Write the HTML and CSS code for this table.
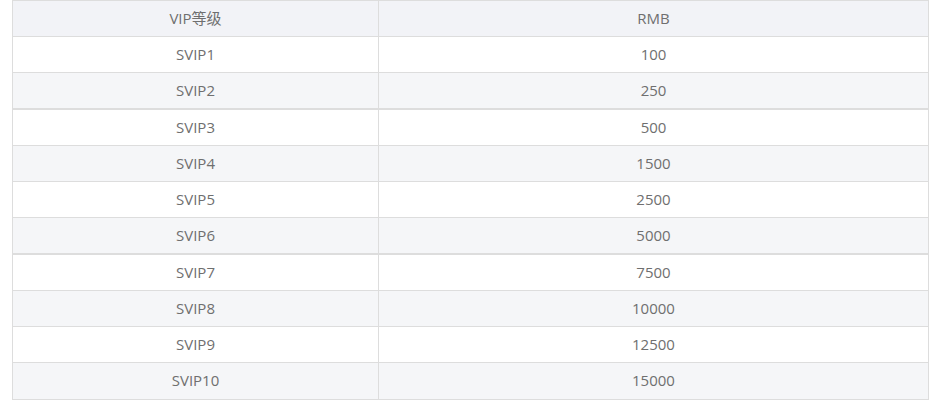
FILE: index.html
```html
<!DOCTYPE html>
<html lang="zh-CN">
<head>
<meta charset="utf-8">
<title>VIP等级</title>
<link rel="stylesheet" href="styles.css">
</head>
<body>
<div class="wrap">
<table class="vip-table">
  <thead>
    <tr><th class="col-level">VIP等级</th><th class="col-rmb">RMB</th></tr>
  </thead>
  <tbody>
    <tr><td>SVIP1</td><td>100</td></tr>
    <tr class="alt group-end"><td>SVIP2</td><td>250</td></tr>
    <tr><td>SVIP3</td><td>500</td></tr>
    <tr class="alt"><td>SVIP4</td><td>1500</td></tr>
    <tr><td>SVIP5</td><td>2500</td></tr>
    <tr class="alt group-end"><td>SVIP6</td><td>5000</td></tr>
    <tr><td>SVIP7</td><td>7500</td></tr>
    <tr class="alt"><td>SVIP8</td><td>10000</td></tr>
    <tr><td>SVIP9</td><td>12500</td></tr>
    <tr class="alt last"><td>SVIP10</td><td>15000</td></tr>
  </tbody>
</table>
</div>
</body>
</html>
```
FILE: styles.css
```css
html, body {
  margin: 0;
  padding: 0;
  background: #ffffff;
}
.wrap {
  padding: 0 0 0 12px;
}
.vip-table {
  width: 917px;
  border-collapse: collapse;
  table-layout: fixed;
  font-family: "Open Sans", "Noto Sans CJK SC", sans-serif;
  font-size: 15px;
  line-height: 20px;
  color: #6f6f6f;
}
.vip-table th,
.vip-table td {
  border: 1px solid #dddddd;
  height: 33px;
  padding: 0 0 2px;
  text-align: center;
  vertical-align: middle;
  font-weight: normal;
}
.col-level { width: 365px; }
.col-rmb { width: auto; }
.vip-table thead th {
  background: #f2f3f7;
}
.vip-table tr.alt td {
  background: #f5f6f8;
}
.vip-table tr.group-end td {
  border-bottom-width: 2px;
}
.vip-table tr.last td {
  height: 34px;
}
```
